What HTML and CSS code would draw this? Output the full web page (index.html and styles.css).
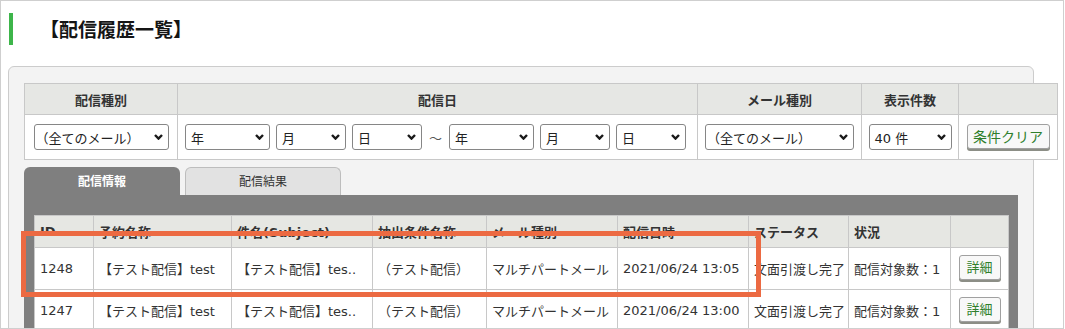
FILE: index.html
```html
<!DOCTYPE html>
<html>
<head>
    <meta charset="utf-8">
    <link rel="stylesheet" href="styles.css">
</head>
<body>
<div class="frame">
    <h1 class="page-title">【配信履歴一覧】</h1>

    <div class="panel">
        <table class="filter">
            <colgroup>
                <col class="c-kind"><col class="c-date"><col class="c-mail"><col class="c-count"><col class="c-btn">
            </colgroup>
            <tr>
                <th>配信種別</th>
                <th>配信日</th>
                <th>メール種別</th>
                <th>表示件数</th>
                <th></th>
            </tr>
            <tr>
                <td class="center">
                    <span class="select sel-kind"><span>（全てのメール）</span><svg width="9" height="6" viewBox="0 0 9 6"><polyline points="1,1 4.5,4.6 8,1"/></svg></span>
                </td>
                <td class="dates">
                    <span class="select sel-year"><span>年</span><svg width="9" height="6" viewBox="0 0 9 6"><polyline points="1,1 4.5,4.6 8,1"/></svg></span>
                    <span class="select sel-md"><span>月</span><svg width="9" height="6" viewBox="0 0 9 6"><polyline points="1,1 4.5,4.6 8,1"/></svg></span>
                    <span class="select sel-md"><span>日</span><svg width="9" height="6" viewBox="0 0 9 6"><polyline points="1,1 4.5,4.6 8,1"/></svg></span>
                    <span class="tilde">～</span>
                    <span class="select sel-year"><span>年</span><svg width="9" height="6" viewBox="0 0 9 6"><polyline points="1,1 4.5,4.6 8,1"/></svg></span>
                    <span class="select sel-md"><span>月</span><svg width="9" height="6" viewBox="0 0 9 6"><polyline points="1,1 4.5,4.6 8,1"/></svg></span>
                    <span class="select sel-md"><span>日</span><svg width="9" height="6" viewBox="0 0 9 6"><polyline points="1,1 4.5,4.6 8,1"/></svg></span>
                </td>
                <td class="center">
                    <span class="select sel-mail"><span>（全てのメール）</span><svg width="9" height="6" viewBox="0 0 9 6"><polyline points="1,1 4.5,4.6 8,1"/></svg></span>
                </td>
                <td class="center">
                    <span class="select sel-count"><span>40 件</span><svg width="9" height="6" viewBox="0 0 9 6"><polyline points="1,1 4.5,4.6 8,1"/></svg></span>
                </td>
                <td class="center">
                    <span class="btn btn-clear">条件クリア</span>
                </td>
            </tr>
        </table>

        <div class="tabs">
            <div class="tab active">配信情報</div>
            <div class="tab plain">配信結果</div>
        </div>

        <div class="tab-body">
            <table class="list">
                <colgroup>
                    <col style="width:59px"><col style="width:138px"><col style="width:141px">
                    <col style="width:114px"><col style="width:131px"><col style="width:131px">
                    <col style="width:100px"><col style="width:102px"><col style="width:58px">
                </colgroup>
                <tr>
                    <th>ID</th>
                    <th>予約名称</th>
                    <th>件名(Subject)</th>
                    <th>抽出条件名称</th>
                    <th>メール種別</th>
                    <th>配信日時</th>
                    <th>ステータス</th>
                    <th>状況</th>
                    <th></th>
                </tr>
                <tr>
                    <td>1248</td>
                    <td>【テスト配信】test</td>
                    <td>【テスト配信】tes..</td>
                    <td>（テスト配信）</td>
                    <td>マルチパートメール</td>
                    <td>2021/06/24 13:05</td>
                    <td>文面引渡し完了</td>
                    <td>配信対象数：1</td>
                    <td class="center"><span class="btn btn-detail">詳細</span></td>
                </tr>
                <tr>
                    <td>1247</td>
                    <td>【テスト配信】test</td>
                    <td>【テスト配信】tes..</td>
                    <td>（テスト配信）</td>
                    <td>マルチパートメール</td>
                    <td>2021/06/24 13:00</td>
                    <td>文面引渡し完了</td>
                    <td>配信対象数：1</td>
                    <td class="center"><span class="btn btn-detail">詳細</span></td>
                </tr>
            </table>
        </div>
    </div>

    <!-- annotation frame -->
    <div class="highlight"></div>
</div>
</body>
</html>
```

FILE: styles.css
```css
body {
    margin: 0;
    font-family: "DejaVu Sans", "Noto Sans CJK JP", sans-serif;
    font-size: 13px;
    color: #333;
}
.frame {
    position: relative;
    width: 1064px;
    height: 329px;
    box-sizing: border-box;
    border: 1px solid #cfcfcf;
    overflow: hidden;
    background: #fff;
}
.page-title {
    margin: 12px 0 0 8px;
    height: 32px;
    border-left: 4px solid #3db54a;
    padding-left: 27px;
    font-family: "Noto Sans CJK JP", sans-serif;
    font-size: 19px;
    line-height: 32px;
    font-weight: bold;
    color: #151515;
}
.panel {
    margin: 21px 0 0 7px;
    width: 1026px;
    height: 320px;
    box-sizing: border-box;
    border: 1px solid #cccccc;
    border-radius: 6px;
    background: #f3f3f3;
    padding: 16px 0 0 15px;
}

/* filter table */
.filter {
    width: 1033px;
    border-collapse: collapse;
    table-layout: fixed;
}
.c-kind { width: 153px; }
.c-date { width: 520px; }
.c-mail { width: 164px; }
.c-count { width: 97px; }
.c-btn { width: 99px; }
.filter th, .filter td {
    border: 1px solid #c8c8c8;
}
.filter th {
    height: 30px;
    padding: 0;
    background: #e6e7e4;
    font-family: "Noto Sans CJK JP", sans-serif;
    font-size: 13px;
    font-weight: bold;
    color: #333;
    text-align: center;
}
.filter td {
    height: 44px;
    padding: 0;
    background: #fff;
    white-space: nowrap;
}
.center {
    text-align: center;
}
.filter td.dates {
    padding-left: 7px;
}
.dates {
    font-size: 0;
}
.dates > * {
    margin-right: 6px;
}
.select {
    display: inline-flex;
    align-items: center;
    justify-content: space-between;
    vertical-align: middle;
    height: 26px;
    box-sizing: border-box;
    border: 1px solid #868686;
    border-radius: 3px;
    background: #fff;
    padding: 0 5px 0 5px;
    font-size: 13px;
    color: #222;
    text-align: left;
}
.select svg polyline {
    fill: none;
    stroke: #1a1a1a;
    stroke-width: 2.4;
}
.sel-kind { width: 135px; padding-left: 1px; }
.sel-year { width: 85px; }
.sel-md { width: 70px; }
.sel-mail { width: 149px; padding-left: 1px; }
.sel-count { width: 83px; }
.tilde {
    display: inline-block;
    vertical-align: middle;
    width: 15px;
    font-family: "Noto Sans CJK JP", sans-serif;
    font-size: 13px;
    color: #555;
    text-align: center;
}

.btn {
    display: inline-block;
    vertical-align: middle;
    height: 25px;
    box-sizing: border-box;
    border: 1px solid #a0a0a0;
    border-radius: 3px;
    background: #f8f8f8;
    box-shadow: 0 2px 0 #8c8e86;
    font-family: "Noto Sans CJK JP", sans-serif;
    color: #2f7f2c;
    text-align: center;
}
.btn-clear {
    width: 83px;
    font-size: 14px;
    line-height: 22px;
    margin-top: -2px;
}
.btn-detail {
    width: 42px;
    font-size: 13px;
    line-height: 22px;
    margin-top: -2px;
}

/* tabs */
.tabs {
    display: flex;
    gap: 5px;
    margin-top: 7px;
}
.tab {
    height: 28px;
    box-sizing: border-box;
    border-radius: 6px 6px 0 0;
    text-align: center;
    font-family: "Noto Sans CJK JP", sans-serif;
    font-size: 12px;
    line-height: 28px;
}
.tab.active {
    width: 156px;
    background: #7f7f7f;
    color: #fff;
    font-weight: bold;
}
.tab.plain {
    width: 156px;
    background: #e2e2e2;
    border: 1px solid #bdbdbd;
    border-bottom: 0;
    color: #333;
    line-height: 26px;
}
.tab-body {
    width: 994px;
    box-sizing: border-box;
    background: #7f7f7f;
    padding: 20px 10px 10px;
}

/* result list */
.list {
    width: 974px;
    border-collapse: collapse;
    table-layout: fixed;
    background: #fff;
}
.list th, .list td {
    border: 1px solid #c8c8c8;
    padding: 0 5px;
    white-space: nowrap;
    overflow: hidden;
    text-align: left;
}
.list th {
    height: 31px;
    background: #e6e7e3;
    font-weight: bold;
    color: #333;
}
.list td {
    height: 41px;
    color: #333;
}
.list td.center {
    text-align: center;
    padding: 0;
}

.highlight {
    position: absolute;
    left: 20px;
    top: 230px;
    width: 740px;
    height: 66px;
    box-sizing: border-box;
    border: 5px solid #ec6a42;
}
```
